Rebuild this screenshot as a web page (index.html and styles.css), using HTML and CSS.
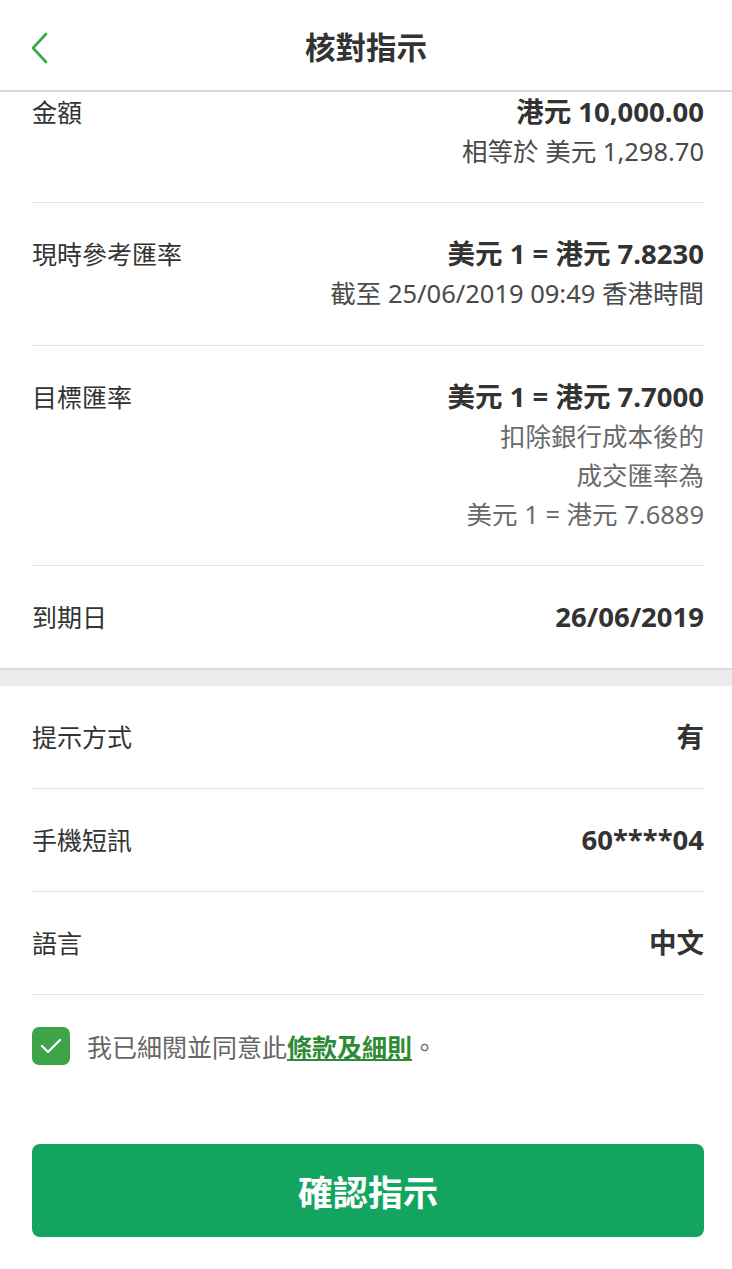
FILE: index.html
```html
<!DOCTYPE html>
<html lang="zh-Hant">
<head>
    <meta charset="UTF-8">
    <meta name="viewport" content="width=device-width, initial-scale=1.0">
    <title>核對指示</title>
    <link rel="stylesheet" href="styles.css">
</head>
<body>
    <header class="topbar">
        <span class="back">
            <svg width="18" height="32" viewBox="0 0 18 32">
                <polyline points="15,2 2,16 15,30" fill="none" stroke="#3aa646" stroke-width="2.6" stroke-linecap="round" stroke-linejoin="round"/>
            </svg>
        </span>
        <h1 class="title">核對指示</h1>
    </header>

    <section class="group">
        <div class="row first">
            <div class="label">金額</div>
            <div class="value">
                <div class="main">港元 10,000.00</div>
                <div class="sub">相等於 美元 1,298.70</div>
            </div>
        </div>
        <div class="row">
            <div class="label">現時參考匯率</div>
            <div class="value">
                <div class="main">美元 1 = 港元 7.8230</div>
                <div class="sub">截至 25/06/2019 09:49 香港時間</div>
            </div>
        </div>
        <div class="row">
            <div class="label">目標匯率</div>
            <div class="value">
                <div class="main">美元 1 = 港元 7.7000</div>
                <div class="sub light">扣除銀行成本後的</div>
                <div class="sub light">成交匯率為</div>
                <div class="sub light">美元 1 = 港元 7.6889</div>
            </div>
        </div>
        <div class="row last">
            <div class="label">到期日</div>
            <div class="value">
                <div class="main">26/06/2019</div>
            </div>
        </div>
    </section>

    <div class="spacer"></div>

    <section class="group">
        <div class="row">
            <div class="label">提示方式</div>
            <div class="value"><div class="main">有</div></div>
        </div>
        <div class="row">
            <div class="label">手機短訊</div>
            <div class="value"><div class="main">60****04</div></div>
        </div>
        <div class="row">
            <div class="label">語言</div>
            <div class="value"><div class="main">中文</div></div>
        </div>
    </section>

    <label class="agree">
        <span class="checkbox">
            <svg width="22" height="16" viewBox="0 0 22 16">
                <polyline points="2,8 8,14 20,2" fill="none" stroke="#fff" stroke-width="2.4" stroke-linecap="round" stroke-linejoin="round"/>
            </svg>
        </span>
        <span class="agree-text">我已細閱並同意此<a href="#" class="terms">條款及細則</a>。</span>
    </label>

    <button class="confirm">確認指示</button>
</body>
</html>
```

FILE: styles.css
```css
body {
    margin: 0;
    background-color: #fff;
    font-family: "Noto Sans", "Noto Sans CJK TC", sans-serif;
    color: #333;
}
.topbar {
    position: relative;
    height: 90px;
    border-bottom: 2px solid #d8d8d8;
    display: flex;
    align-items: center;
    justify-content: center;
}
.back {
    position: absolute;
    left: 31px;
    top: 32px;
    line-height: 0;
}
.title {
    margin: 0;
    font-size: 30.5px;
    font-weight: 700;
    color: #333;
    line-height: 40px;
    margin-top: 4px;
}
.group {
    padding: 0 28px 0 32px;
}
.row {
    display: flex;
    justify-content: space-between;
    padding: 31px 0;
    border-bottom: 1px solid #e3e3e3;
    line-height: 40px;
    font-size: 25px;
}
.row.first {
    padding-top: 0;
}
.row.last {
    border-bottom: none;
}
.label {
    color: #333;
}
.value {
    text-align: right;
}
.main {
    font-weight: 700;
    font-size: 27.5px;
    color: #333;
}
.sub {
    line-height: 39.3px;
    font-size: 25.5px;
    color: #4a4a4a;
}
.sub.light {
    color: #6a6a6a;
}
.spacer {
    height: 16px;
    background-color: #ececec;
    border-top: 2px solid #dcdcdc;
}
.agree {
    display: flex;
    align-items: center;
    padding: 32px 0 0 32px;
    font-size: 25px;
    color: #666;
}
.checkbox {
    width: 38px;
    height: 38px;
    border-radius: 7px;
    background-color: #3da447;
    display: flex;
    align-items: center;
    justify-content: center;
    margin-right: 17px;
}
.terms {
    color: #2f8a38;
    font-weight: 700;
    text-decoration: underline;
}
.confirm {
    display: block;
    width: 672px;
    height: 93px;
    margin: 79px 0 0 32px;
    border: none;
    border-radius: 8px;
    background-color: #13a560;
    color: #fff;
    font-family: "Noto Sans", "Noto Sans CJK TC", sans-serif;
    font-size: 35px;
    font-weight: 700;
    cursor: pointer;
}
```
